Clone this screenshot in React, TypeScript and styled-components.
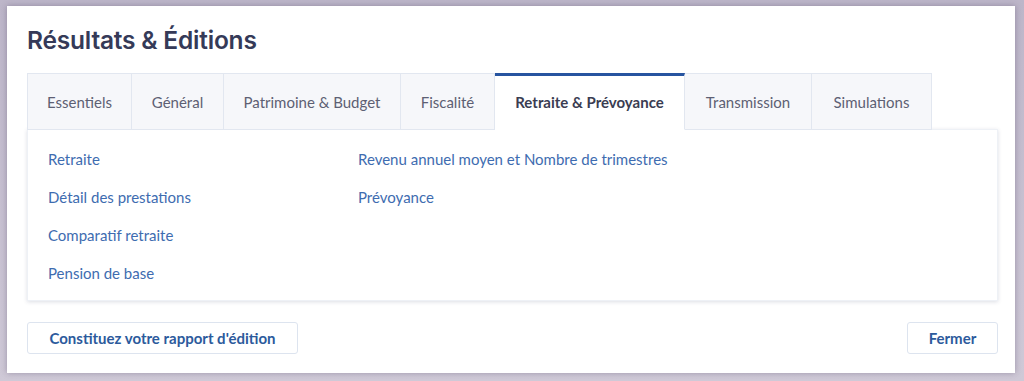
import React from 'react';
import styled, { createGlobalStyle } from 'styled-components';

const GlobalStyle = createGlobalStyle`
  html, body {
    margin: 0;
    padding: 0;
    background: #c7c1d1;
  }
  body {
    font-family: Lato, "Open Sans", sans-serif;
  }
`;

const Page = styled.div`
  width: 1024px;
  height: 381px;
  padding: 6px 9px 8px 7px;
  box-sizing: border-box;
  background: linear-gradient(180deg, #bdb6c9 0%, #cfc9d7 100%);
`;

const Modal = styled.div`
  width: 100%;
  height: 100%;
  background: #fff;
  box-shadow: 0 0 6px rgba(60, 50, 80, 0.35);
  padding: 0 18px 0 20px;
  box-sizing: border-box;
  display: flex;
  flex-direction: column;
`;

const Title = styled.h1`
  margin: 19px 0 0;
  font-family: Inter, "Noto Sans", sans-serif;
  font-size: 24.5px;
  font-weight: 600;
  letter-spacing: -0.2px;
  color: #353a58;
  line-height: 30px;
`;

const TabBar = styled.div`
  display: flex;
  margin-top: 18px;
  height: 57px;
  position: relative;
  z-index: 1;
`;

const Tab = styled.div<{ $active?: boolean; $first?: boolean; $width: number }>`
  display: flex;
  align-items: center;
  justify-content: center;
  box-sizing: border-box;
  width: ${(p) => p.$width}px;
  white-space: nowrap;
  padding: 0;
  font-size: 15px;
  color: ${(p) => (p.$active ? '#3a3d52' : '#5d6073')};
  font-weight: ${(p) => (p.$active ? 700 : 400)};
  background: ${(p) => (p.$active ? '#fff' : '#f6f7fa')};
  border-top: ${(p) => (p.$active ? '3px solid #2754a0' : '1px solid #e2e7f0')};
  border-right: 1px solid #e2e7f0;
  border-left: ${(p) => (p.$first ? '1px solid #e2e7f0' : 'none')};
  border-bottom: ${(p) => (p.$active ? '1px solid #fff' : '1px solid #e2e7f0')};
  ${(p) => (p.$active ? 'padding-bottom: 2px;' : '')}
`;

const Panel = styled.div`
  width: 971px;
  height: 172px;
  margin-top: -1px;
  background: #fff;
  box-shadow: 0 1px 4px rgba(40, 50, 90, 0.16);
  border: 1px solid #eef1f6;
  box-sizing: border-box;
  display: grid;
  grid-template-columns: 310px 1fr;
  padding: 20px 0 0 20px;
`;

const LinkColumn = styled.div`
  display: flex;
  flex-direction: column;
  gap: 19px;
`;

const LinkItem = styled.a`
  font-size: 15px;
  line-height: 19px;
  color: #3e6cb0;
  text-decoration: none;
  cursor: pointer;
`;

const Footer = styled.div`
  display: flex;
  justify-content: space-between;
  margin-top: 21px;
  width: 971px;
`;

const Button = styled.button<{ $wide?: boolean }>`
  height: 32px;
  width: ${(p) => (p.$wide ? '271px' : '91px')};
  background: #fff;
  border: 1px solid #dde4ef;
  border-radius: 3px;
  font-family: Lato, "Open Sans", sans-serif;
  font-size: 15px;
  font-weight: 700;
  color: #2c5a9c;
  cursor: pointer;
  padding: 0;
`;

const tabs: [string, number][] = [
  ['Essentiels', 105],
  ['Général', 92],
  ['Patrimoine & Budget', 177],
  ['Fiscalité', 94],
  ['Retraite & Prévoyance', 190],
  ['Transmission', 127],
  ['Simulations', 120],
];

export default function App() {
  return (
    <>
      <GlobalStyle />
      <Page>
        <Modal>
          <Title>Résultats &amp; Éditions</Title>
          <TabBar>
            {tabs.map(([t, w], i) => (
              <Tab
                key={t}
                $width={w}
                $first={i === 0}
                $active={t === 'Retraite & Prévoyance'}
              >
                {t}
              </Tab>
            ))}
          </TabBar>
          <Panel>
            <LinkColumn>
              <LinkItem>Retraite</LinkItem>
              <LinkItem>Détail des prestations</LinkItem>
              <LinkItem>Comparatif retraite</LinkItem>
              <LinkItem>Pension de base</LinkItem>
            </LinkColumn>
            <LinkColumn>
              <LinkItem>Revenu annuel moyen et Nombre de trimestres</LinkItem>
              <LinkItem>Prévoyance</LinkItem>
            </LinkColumn>
          </Panel>
          <Footer>
            <Button $wide>Constituez votre rapport d'édition</Button>
            <Button>Fermer</Button>
          </Footer>
        </Modal>
      </Page>
    </>
  );
}
